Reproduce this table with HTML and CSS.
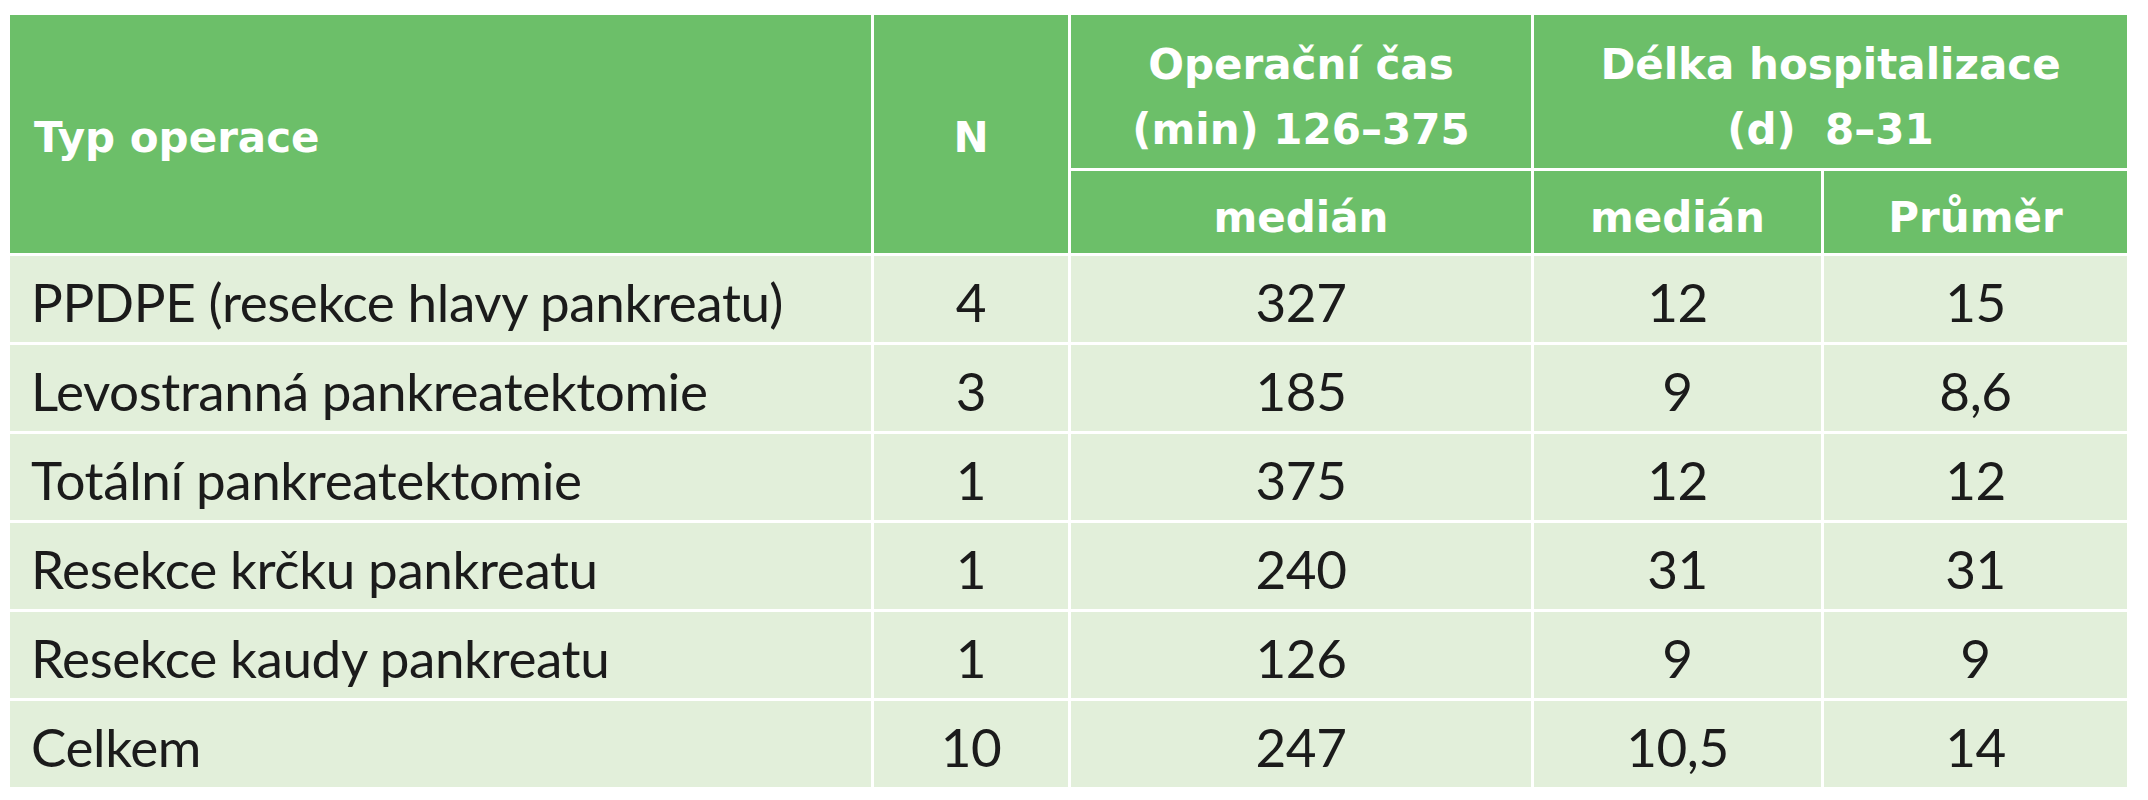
FILE: index.html
```html
<!DOCTYPE html>
<html lang="cs">
<head>
<meta charset="utf-8">
<title>Typ operace</title>
<link rel="stylesheet" href="styles.css">
</head>
<body>
<table class="data">
  <colgroup>
    <col class="c1"><col class="c2"><col class="c3"><col class="c4"><col class="c5">
  </colgroup>
  <thead>
    <tr class="h1">
      <th rowspan="2" class="left">Typ operace</th>
      <th rowspan="2">N</th>
      <th class="two">Operační čas<br>(min) 126–375</th>
      <th colspan="2" class="two">Délka hospitalizace<br>(d)&nbsp; 8–31</th>
    </tr>
    <tr class="h2">
      <th class="sub">medián</th>
      <th class="sub">medián</th>
      <th class="sub">Průměr</th>
    </tr>
  </thead>
  <tbody>
    <tr><td class="left">PPDPE (resekce hlavy pankreatu)</td><td>4</td><td>327</td><td>12</td><td>15</td></tr>
    <tr><td class="left">Levostranná pankreatektomie</td><td>3</td><td>185</td><td>9</td><td>8,6</td></tr>
    <tr><td class="left">Totální pankreatektomie</td><td>1</td><td>375</td><td>12</td><td>12</td></tr>
    <tr><td class="left">Resekce krčku pankreatu</td><td>1</td><td>240</td><td>31</td><td>31</td></tr>
    <tr><td class="left">Resekce kaudy pankreatu</td><td>1</td><td>126</td><td>9</td><td>9</td></tr>
    <tr><td class="left">Celkem</td><td>10</td><td>247</td><td>10,5</td><td>14</td></tr>
  </tbody>
</table>
</body>
</html>
```
FILE: styles.css
```css
html, body {
  margin: 0;
  padding: 0;
  background: #ffffff;
}

body {
  padding: 12px 0 0 7px;
}

.data {
  table-layout: fixed;
  border-collapse: separate;
  border-spacing: 3px;
  width: 2123px;
  background: #ffffff;
}

.c1 { width: 861px; }
.c2 { width: 194px; }
.c3 { width: 460px; }
.c4 { width: 287px; }
.c5 { width: 303px; }

.data th {
  background: #6cbf69;
  color: #ffffff;
  font-family: "DejaVu Sans", sans-serif;
  font-weight: bold;
  font-size: 42px;
  text-align: center;
  vertical-align: middle;
  padding: 8px 0 0 0;
  line-height: 48px;
}

.data th.left {
  text-align: left;
  padding-left: 24px;
}

.h1 { height: 153px; }
.h2 { height: 82px; }

.data th.two {
  line-height: 65px;
  padding-top: 10px;
}

.data th.sub {
  padding-top: 12px;
}

.data td {
  background: #e2efda;
  color: #1b1b1b;
  font-family: "Lato", sans-serif;
  font-size: 53px;
  letter-spacing: -0.4px;
  line-height: 60px;
  text-align: center;
  vertical-align: middle;
  padding: 6px 0 0 0;
}

.data tbody tr {
  height: 86px;
}

.data td.left {
  text-align: left;
  padding-left: 21px;
}
```
